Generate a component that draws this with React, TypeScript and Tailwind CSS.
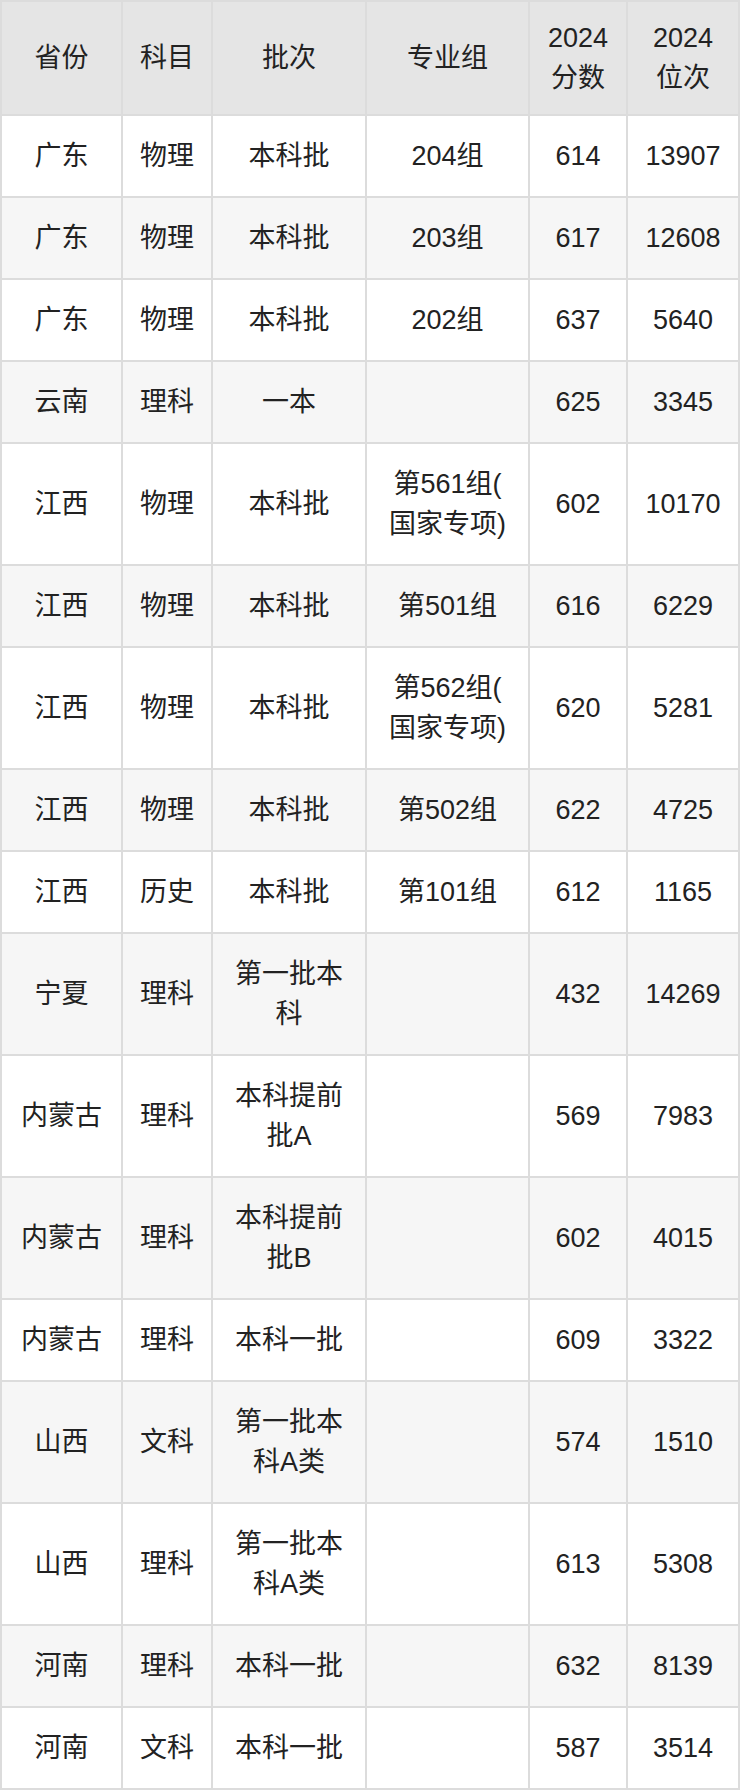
import React from "react";

const rows: string[][] = [
  ["广东", "物理", "本科批", "204组", "614", "13907"],
  ["广东", "物理", "本科批", "203组", "617", "12608"],
  ["广东", "物理", "本科批", "202组", "637", "5640"],
  ["云南", "理科", "一本", "", "625", "3345"],
  ["江西", "物理", "本科批", "第561组(\n国家专项)", "602", "10170"],
  ["江西", "物理", "本科批", "第501组", "616", "6229"],
  ["江西", "物理", "本科批", "第562组(\n国家专项)", "620", "5281"],
  ["江西", "物理", "本科批", "第502组", "622", "4725"],
  ["江西", "历史", "本科批", "第101组", "612", "1165"],
  ["宁夏", "理科", "第一批本科", "", "432", "14269"],
  ["内蒙古", "理科", "本科提前批A", "", "569", "7983"],
  ["内蒙古", "理科", "本科提前批B", "", "602", "4015"],
  ["内蒙古", "理科", "本科一批", "", "609", "3322"],
  ["山西", "文科", "第一批本科A类", "", "574", "1510"],
  ["山西", "理科", "第一批本科A类", "", "613", "5308"],
  ["河南", "理科", "本科一批", "", "632", "8139"],
  ["河南", "文科", "本科一批", "", "587", "3514"],
];

const headers = ["省份", "科目", "批次", "专业组", "2024分数", "2024位次"];
const widths = ["w-[121px]", "w-[90px]", "w-[154px]", "w-[163px]", "w-[98px]", "w-[112px]"];

export default function App() {
  return (
    <div className="bg-white w-[740px]">
      <table
        className="w-[738px] table-fixed border-collapse border-2 border-[#dcdcdc] text-[27px] leading-[40px] text-[#222222] text-center"
        style={{ fontFamily: '"Liberation Sans", "Noto Sans CJK SC", sans-serif' }}
      >
        <colgroup>
          {widths.map((w, i) => (
            <col key={i} className={w} />
          ))}
        </colgroup>
        <thead>
          <tr className="bg-[#e5e5e5]">
            {headers.map((h, i) => (
              <th
                key={i}
                className="border-2 border-[#dcdcdc] px-4 py-4 font-normal align-middle"
              >
                {h}
              </th>
            ))}
          </tr>
        </thead>
        <tbody>
          {rows.map((r, ri) => (
            <tr key={ri} className={ri % 2 === 1 ? "bg-[#f6f6f6]" : "bg-white"}>
              {r.map((c, ci) => (
                <td
                  key={ci}
                  className="border-2 border-[#dcdcdc] px-4 py-5 align-middle whitespace-pre-line"
                >
                  {c}
                </td>
              ))}
            </tr>
          ))}
        </tbody>
      </table>
    </div>
  );
}
